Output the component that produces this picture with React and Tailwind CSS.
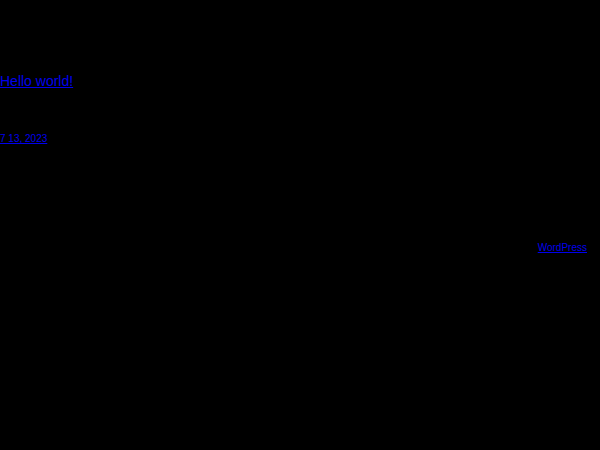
import React from 'react';

export default function App() {
    return (
        <div className="w-[600px] h-[450px] bg-black font-[Liberation_Sans,Arial,sans-serif] flex flex-col">
            <div className="pt-[72px] text-[14px] leading-[18px]">
                <a href="#" className="text-[#0000ee] underline">Hello world!</a>
            </div>
            <div className="pt-[43px] text-[10px] leading-[12px]">
                <a href="#" className="text-[#0000ee] underline">7 13, 2023</a>
            </div>
            <div className="pt-[97px] flex justify-end pr-[13px] text-[10px] leading-[12px]">
                <a href="#" className="text-[#0000ee] underline">WordPress</a>
            </div>
        </div>
    );
}
